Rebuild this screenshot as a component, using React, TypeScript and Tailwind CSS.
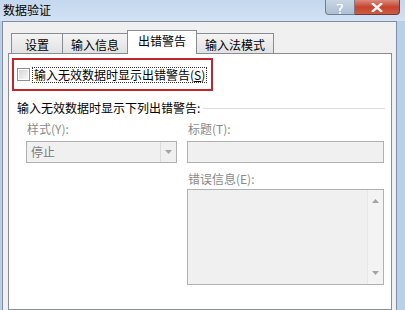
import React from "react";

const font = { fontFamily: '"Noto Sans CJK SC", "Noto Sans", sans-serif' };

function Tab({ label, active = false, width }: { label: string; active?: boolean; width: string }) {
    if (active) {
        return (
            <div
                className={`relative z-10 -ml-px -mb-px h-[24px] ${width} border border-b-0 border-[#898c95] bg-white flex justify-center pt-[3px] text-[12px] leading-[14px] text-black`}
            >
                {label}
            </div>
        );
    }
    return (
        <div
            className={`-ml-px first:ml-0 h-[20px] ${width} border border-b-0 border-[#898c95] bg-linear-to-b from-[#f4f4f4] to-[#e2e2e2] flex justify-center pt-[4px] text-[12px] leading-[14px] text-black`}
        >
            {label}
        </div>
    );
}

function Arrow({ up = false }: { up?: boolean }) {
    return (
        <svg width="7" height="4" viewBox="0 0 7 4">
            {up ? <path d="M0 4 L3.5 0 L7 4 Z" fill="#a3a3a3" /> : <path d="M0 0 L3.5 4 L7 0 Z" fill="#a3a3a3" />}
        </svg>
    );
}

export default function App() {
    return (
        <div className="w-[405px] h-[310px] overflow-hidden bg-[#b9d0e9] flex flex-col" style={font}>
            {/* title bar */}
            <div className="h-[21px] shrink-0 flex justify-between bg-linear-to-b from-[#c3d7ee] to-[#d3e2f3]">
                <div className="pl-[3px] pt-[2px] text-[12px] leading-[15px] text-black">数据验证</div>
                <div className="flex mr-[5px] h-[15px]">
                    <div className="w-[30px] h-[15px] border border-t-0 border-[#6f7f95] rounded-bl-[4px] bg-linear-to-b from-[#c9d6e5] to-[#aebfd3] flex justify-center items-end">
                        <svg width="8" height="10" viewBox="0 0 8 10">
                            <path d="M1 1 Q4 -1 6 1 Q7 3 4 5 L4 7" stroke="#ffffff" strokeWidth="1.6" fill="none" />
                            <circle cx="4" cy="9" r="1" fill="#ffffff" />
                        </svg>
                    </div>
                    <div className="w-[45px] h-[15px] border border-t-0 border-l-0 border-[#6f3a32] rounded-br-[4px] bg-linear-to-b from-[#d98a7c] via-[#c4432d] to-[#d05b43] flex justify-center items-end pb-[2px]">
                        <svg width="12" height="9" viewBox="0 0 12 9">
                            <path d="M1 0 L11 9 M11 0 L1 9" stroke="#f4f4f4" strokeWidth="2.4" />
                        </svg>
                    </div>
                </div>
            </div>

            {/* window body */}
            <div className="flex-1 ml-[2px] mr-[8px] border border-b-0 border-[#7f8ea3] bg-[#f0f0f0] pl-[5px] pr-[4px] pt-[8px] flex flex-col">
                {/* tabs */}
                <div className="flex items-end pl-[3px]">
                    <Tab label="设置" width="w-[52px]" />
                    <Tab label="输入信息" width="w-[66px]" />
                    <Tab label="出错警告" width="w-[70px]" active />
                    <Tab label="输入法模式" width="w-[78px]" />
                </div>

                {/* tab panel */}
                <div className="flex-1 border border-[#898c95] bg-white pt-[4px]">
                    <div className="ml-[3px] w-[201px] h-[33px] border-2 border-[#c0272d] flex items-center pl-[3px]">
                        <div className="w-[13px] h-[13px] border border-[#8e8f8f] p-px bg-white">
                            <div className="w-full h-full bg-linear-to-br from-[#d6d6d6] to-[#f8f8f8]" />
                        </div>
                        <div className="ml-[2px] px-px border border-dotted border-[#333] text-[12px] leading-[14px] text-black">
                            输入无效数据时显示出错警告(<span className="underline">S</span>)
                        </div>
                    </div>

                    <div className="mt-[10px] pl-[8px] pr-[6px] flex items-center gap-[3px]">
                        <span className="text-[12px] leading-[14px] text-black">输入无效数据时显示下列出错警告:</span>
                        <div className="flex-1 h-px bg-[#d5dfe5]" />
                    </div>

                    <div className="mt-[7px] pl-[17px] flex gap-[10px]">
                        <div className="w-[151px] flex flex-col">
                            <span className="pl-px text-[12px] leading-[14px] text-[#8a8a8a]">样式(Y):</span>
                            <div className="mt-[5px] h-[22px] border border-[#b1b1b1] bg-[#f0f0f0] flex">
                                <span className="flex-1 pl-[4px] text-[12px] leading-[20px] text-[#7c7c7c]">停止</span>
                                <div className="w-[16px] border-l border-[#dcdcdc] flex items-center justify-center">
                                    <Arrow />
                                </div>
                            </div>
                        </div>
                        <div className="w-[197px] flex flex-col">
                            <span className="pl-px text-[12px] leading-[14px] text-[#8a8a8a]">标题(T):</span>
                            <div className="mt-[5px] h-[22px] border border-[#b1b1b1] bg-[#f0f0f0]" />
                            <span className="mt-[9px] pl-px text-[12px] leading-[14px] text-[#8a8a8a]">错误信息(E):</span>
                            <div className="mt-[3px] h-[96px] border border-[#b1b1b1] bg-[#f0f0f0] flex justify-end">
                                <div className="w-[16px] border-l border-[#e6e6e6] bg-[#f3f3f3] flex flex-col items-center justify-between pt-[9px] pb-[9px]">
                                    <Arrow up />
                                    <Arrow />
                                </div>
                            </div>
                        </div>
                    </div>
                </div>
            </div>
        </div>
    );
}
